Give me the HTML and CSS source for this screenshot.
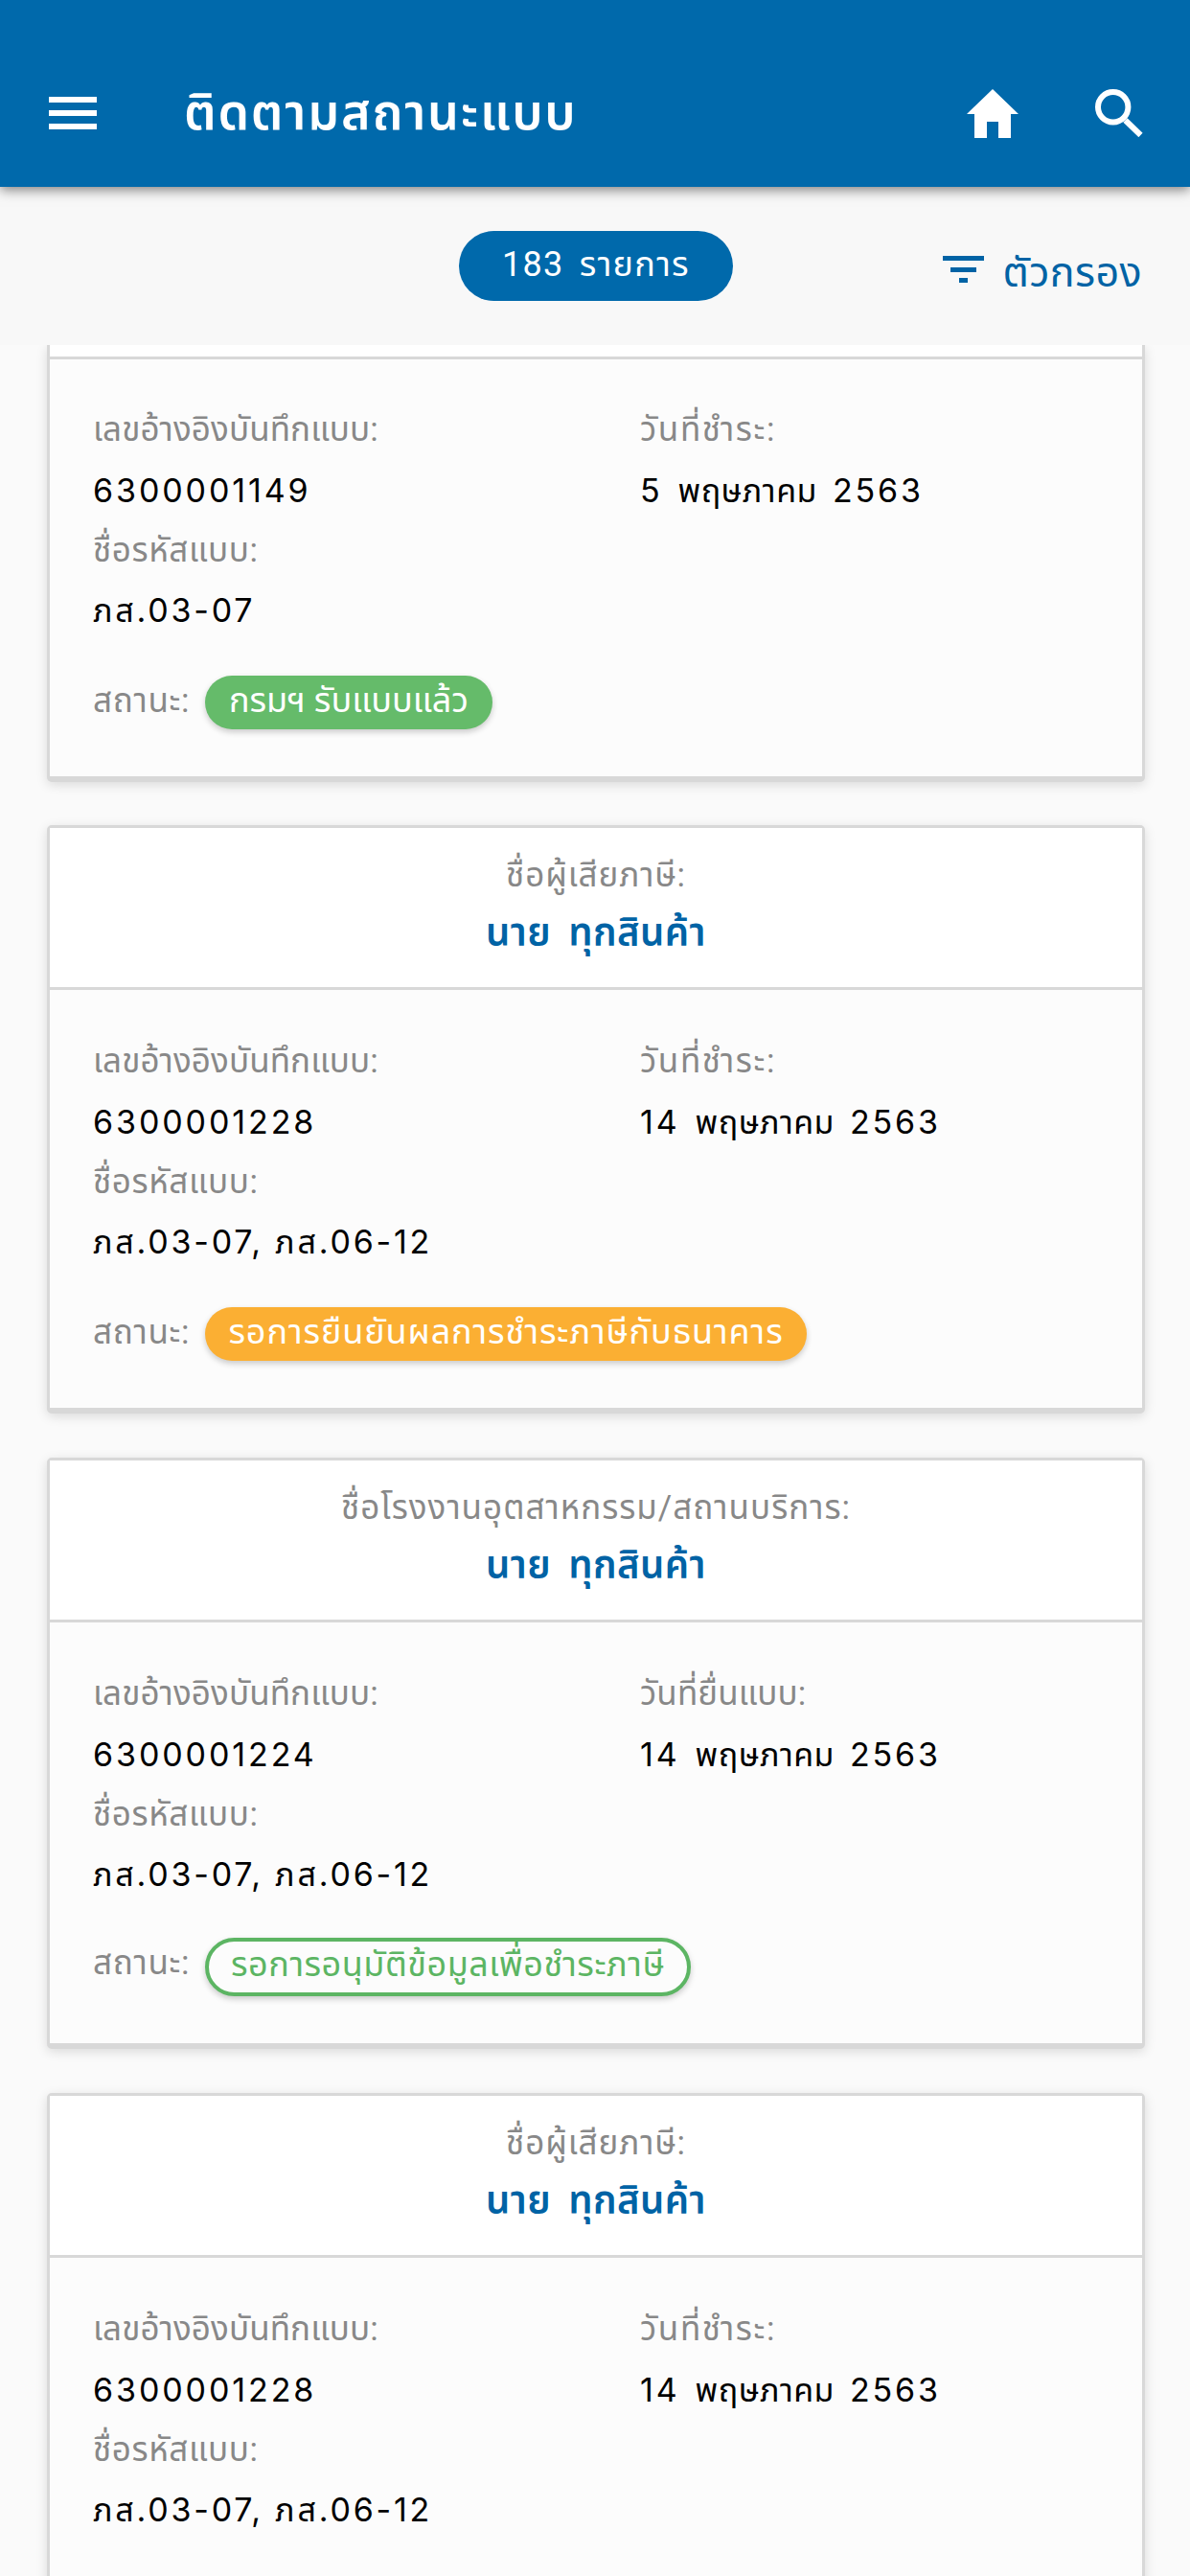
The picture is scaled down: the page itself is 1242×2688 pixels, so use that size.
FILE: index.html
```
<!DOCTYPE html>
<html lang="th">
<head>
<meta charset="utf-8">
<title>ติดตามสถานะแบบ</title>
<link rel="stylesheet" href="styles.css">
</head>
<body>
<div class="screen">
  <header class="appbar">
    <svg class="menu" viewBox="0 0 50 34"><path d="M0 0h50v6H0zM0 14h50v6H0zM0 28h50v6H0z"/></svg>
    <h1 class="title">ติดตามสถานะแบบ</h1>
    <svg class="home" viewBox="0 0 54 51"><path d="M27 0L54 26H46V51H33V34H21V51H8V26H0z"/></svg>
    <svg class="search" viewBox="0 0 50 50"><circle cx="18.7" cy="18.7" r="15.7"/><path d="M31.5 32.5L47.5 48"/></svg>
  </header>
  <div class="toolbar">
    <span class="count">183 รายการ</span>
    <span class="filter">
      <svg viewBox="0 0 43 28"><path d="M0 0h43v5H0zM8 12h27v5H8zM17 23h9v5h-9z"/></svg>
      <span>ตัวกรอง</span>
    </span>
  </div>
  <main class="list">
    <article class="card card-cut">
      <div class="head"></div>
      <div class="body">
        <div class="grid">
          <div class="label">เลขอ้างอิงบันทึกแบบ:</div><div class="label paid">วันที่ชำระ:</div>
          <div class="value"><span class="num">6300001149</span></div><div class="value date"><span class="num">5</span> พฤษภาคม <span class="num">2563</span></div>
          <div class="label form">ชื่อรหัสแบบ:</div><div></div>
          <div class="value code">ภส.03-07</div><div></div>
        </div>
        <div class="status"><span class="key">สถานะ:</span><span class="badge green">กรมฯ รับแบบแล้ว</span></div>
      </div>
    </article>
    <article class="card">
      <div class="head">
        <div class="label payer">ชื่อผู้เสียภาษี:</div>
        <div class="name">นาย ทุกสินค้า</div>
      </div>
      <div class="body">
        <div class="grid">
          <div class="label">เลขอ้างอิงบันทึกแบบ:</div><div class="label paid">วันที่ชำระ:</div>
          <div class="value"><span class="num">6300001228</span></div><div class="value date"><span class="num">14</span> พฤษภาคม <span class="num">2563</span></div>
          <div class="label form">ชื่อรหัสแบบ:</div><div></div>
          <div class="value code">ภส.03-07, ภส.06-12</div><div></div>
        </div>
        <div class="status"><span class="key">สถานะ:</span><span class="badge amber">รอการยืนยันผลการชำระภาษีกับธนาคาร</span></div>
      </div>
    </article>
    <article class="card">
      <div class="head">
        <div class="label plant">ชื่อโรงงานอุตสาหกรรม/สถานบริการ:</div>
        <div class="name">นาย ทุกสินค้า</div>
      </div>
      <div class="body">
        <div class="grid">
          <div class="label">เลขอ้างอิงบันทึกแบบ:</div><div class="label">วันที่ยื่นแบบ:</div>
          <div class="value"><span class="num">6300001224</span></div><div class="value date"><span class="num">14</span> พฤษภาคม <span class="num">2563</span></div>
          <div class="label form">ชื่อรหัสแบบ:</div><div></div>
          <div class="value code">ภส.03-07, ภส.06-12</div><div></div>
        </div>
        <div class="status status-outline"><span class="key">สถานะ:</span><span class="badge outline">รอการอนุมัติข้อมูลเพื่อชำระภาษี</span></div>
      </div>
    </article>
    <article class="card card-last">
      <div class="head">
        <div class="label payer">ชื่อผู้เสียภาษี:</div>
        <div class="name">นาย ทุกสินค้า</div>
      </div>
      <div class="body">
        <div class="grid">
          <div class="label">เลขอ้างอิงบันทึกแบบ:</div><div class="label paid">วันที่ชำระ:</div>
          <div class="value"><span class="num">6300001228</span></div><div class="value date"><span class="num">14</span> พฤษภาคม <span class="num">2563</span></div>
          <div class="label form">ชื่อรหัสแบบ:</div><div></div>
          <div class="value code">ภส.03-07, ภส.06-12</div><div></div>
        </div>
      </div>
    </article>
  </main>
</div>
</body>
</html>
```
FILE: styles.css
```
* { box-sizing: border-box; }
body { margin: 0; font-family: Roboto, "Noto Sans Thai", sans-serif; font-size: 34px; color: #000; background: #fafafa; }
.screen { height: 2688px; display: flex; flex-direction: column; overflow: hidden; white-space: nowrap; }

.appbar { position: relative; z-index: 2; flex: none; height: 195px; padding: 80px 49px 0 51px; display: flex; align-items: flex-start; background: #0069ab; color: #fff; box-shadow: 0 3px 12px rgba(0,0,0,.5); }
.appbar svg { flex: none; fill: #fff; }
.menu { width: 50px; height: 34px; margin-top: 21px; }
.title { flex: 1; margin: 0 0 0 91px; font-size: 52px; line-height: 76px; font-weight: 600; letter-spacing: 1.8px; }
.home { width: 54px; height: 51px; margin: 13px 80px 0 0; }
.appbar .search { width: 50px; height: 50px; margin-top: 13px; fill: none; stroke: #fff; stroke-width: 6; }

.toolbar { flex: none; height: 165px; padding: 46px 50px 0 479px; display: flex; justify-content: space-between; align-items: flex-start; background: #f8f8f8; }
.count { width: 286px; height: 73px; border-radius: 37px; background: #0069ab; color: #fff; text-align: center; font-size: 36px; line-height: 70px; letter-spacing: 1.3px; word-spacing: 6px; }
.filter { width: 208px; display: flex; align-items: flex-start; justify-content: space-between; color: #0063a5; font-size: 43px; line-height: 86px; letter-spacing: .4px; }
.filter svg { width: 43px; height: 28px; margin-top: 26px; fill: #0063a5; }

.list { flex: 1; min-height: 0; overflow: hidden; padding: 0 47px 0 49px; display: flex; flex-direction: column; gap: 46px; }
.card { flex: none; border: 3px solid #d8d8d8; border-bottom-width: 6px; border-radius: 5px; background: #fcfcfc; box-shadow: 0 3px 12px rgba(0,0,0,.13); }
.card-cut { border-top: 0; border-radius: 0 0 5px 5px; margin-bottom: -1px; }
.card-last { height: 618px; }
.head { height: 169px; padding-top: 20px; border-bottom: 3px solid #d8d8d8; background: #fff; text-align: center; line-height: 60px; }
.card-cut .head { height: 15px; padding: 0; }
.body { padding: 43px 45px 49px; }
.card-cut .body { padding-top: 42px; }

.label, .key { color: #888; font-size: 35px; }
.label { letter-spacing: .1px; }
.paid { letter-spacing: 1.6px; }
.form { letter-spacing: .6px; }
.payer { letter-spacing: .9px; }
.plant { letter-spacing: 1px; }
.name { color: #0063a5; font-size: 40px; font-weight: 600; word-spacing: 8px; letter-spacing: .4px; }

.grid { display: grid; grid-template-columns: 571px 1fr; grid-auto-rows: 63px; line-height: 63px; }
.num, .code { font-family: Inter, "Noto Sans Thai", sans-serif; }
.num { letter-spacing: 2.9px; }
.date { letter-spacing: .5px; word-spacing: 7px; }
.code { line-height: 62px; letter-spacing: 2.8px; }

.status { display: flex; align-items: flex-start; margin-top: 36px; line-height: 53px; }
.key { width: 117px; letter-spacing: .7px; }
.badge { height: 56px; border-radius: 31px; text-align: center; color: #fff; font-size: 36px; box-shadow: 0 3px 6px rgba(0,0,0,.2); }
.green { width: 300px; background: #65bb6a; }
.amber { width: 628px; background: #fbaf33; letter-spacing: .9px; }
.status-outline { margin-top: 34px; }
.outline { width: 507px; height: 61px; border: 4px solid #5cb563; background: #fcfcfc; color: #5cb563; line-height: 48px; letter-spacing: .5px; }
```
